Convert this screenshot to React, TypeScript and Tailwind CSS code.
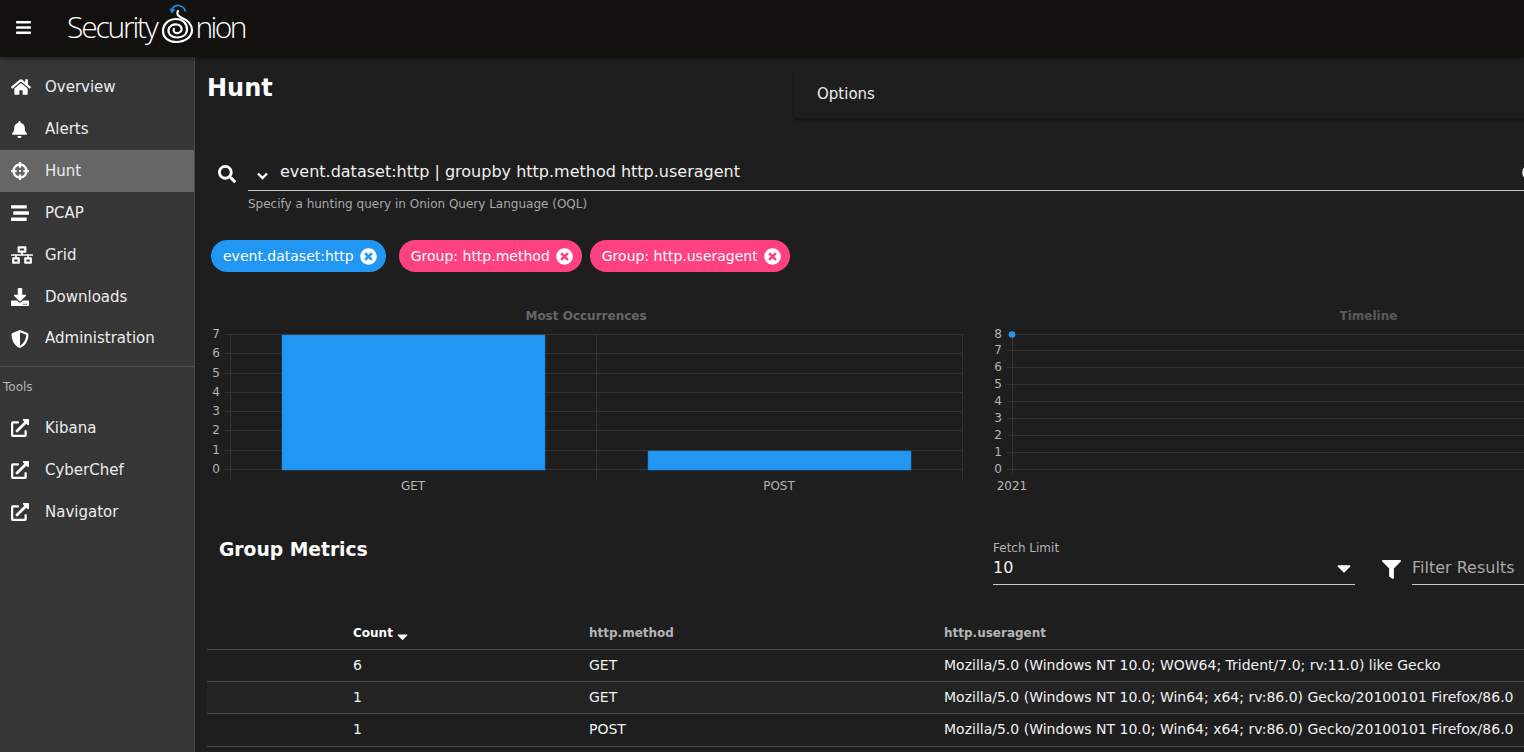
import React from "react";
import { FaBars, FaHome, FaBell, FaCrosshairs, FaStream, FaNetworkWired, FaDownload, FaShieldAlt, FaExternalLinkAlt, FaSearch, FaTimesCircle, FaFilter, FaCaretDown } from "react-icons/fa";

const font = "font-['DejaVu_Sans',sans-serif]";

function Logo() {
  return (
    <div className="flex items-center h-full ml-[35px] text-white font-['Open_Sans',sans-serif] font-light text-[30px] tracking-[-2.2px] leading-none select-none">
      <span className="-mt-[3px]">Security</span>
      <svg width="39" height="57" viewBox="158 0 39 57" className="shrink-0" fill="none">
        <path d="M187.500 11.500 C186 6 178 2.500 174 9" stroke="#1e88e5" strokeWidth="1.8" />
        <path d="M171.500 8.500 L177.500 9.500 L173.500 13.500 Z" fill="#1e88e5" />
        <path d="M180 11 C178 14 180 16 184 18 C190 20 194 25 194 30 C194 37 187 42 178 42 C171 42 165 38 165 31 C165 24 171 19 178 19 C185 19 189.500 24 189 30 C188.500 35 184 37.500 179 37.500 C173.500 37.500 170 34 170.500 30 C171 26 175 24 179 24.500 C182 25 184 27 183.500 30 C183 32.500 180 33.500 178 33 C176 32.500 175 30.500 176 29" stroke="white" strokeWidth="2.200" strokeLinecap="round" />
      </svg>
      <span className="-mt-[3px] tracking-[-2.6px]">nion</span>
    </div>
  );
}

const navTop = [
  { label: "Overview", Icon: FaHome, size: 20 },
  { label: "Alerts", Icon: FaBell, size: 17 },
  { label: "Hunt", Icon: FaCrosshairs, size: 18, active: true },
  { label: "PCAP", Icon: FaStream, size: 18 },
  { label: "Grid", Icon: FaNetworkWired, size: 22 },
  { label: "Downloads", Icon: FaDownload, size: 18 },
  { label: "Administration", Icon: FaShieldAlt, size: 18, short: true },
];
const navTools = ["Kibana", "CyberChef", "Navigator"];

function NavRow({ label, Icon, size, active, short }: { label: string; Icon: React.ComponentType<{ size?: number }>; size: number; active?: boolean; short?: boolean }) {
  return (
    <div className={`flex items-center pl-[11px] ${short ? "h-[41px]" : "h-[42px]"} ${active ? "bg-[#666666]" : ""}`}>
      <div className="w-[34px] shrink-0 flex text-white"><Icon size={size} /></div>
      <span className="text-[15px] text-[#ececec] leading-[20px] -mt-[1px]">{label}</span>
    </div>
  );
}

function Chip({ text, color, className }: { text: string; color: string; className?: string }) {
  return (
    <div className={`h-8 rounded-full pl-3 pr-[8px] flex items-center text-[14px] text-white ${color} ${className ?? ""}`}>
      <span className="whitespace-nowrap">{text}</span>
      <span className="ml-[6px] w-[18px] flex justify-center"><FaTimesCircle size={17} /></span>
    </div>
  );
}

const labelCls = { fill: "#b4b4b4", fontSize: 12, fontFamily: "DejaVu Sans" };

function BarChart() {
  const ys = [469, 450, 430, 411, 392, 373, 353, 334];
  return (
    <svg width="768" height="170" viewBox="207 325 768 170" className="block shrink-0">
      {ys.map((y, i) => (
        <g key={y}>
          <line x1="225" x2="963" y1={y + 0.5} y2={y + 0.5} stroke="#333333" />
          <text x="220" y={y + 4} textAnchor="end" {...labelCls}>{i}</text>
        </g>
      ))}
      {[230, 596, 962].map((x) => (
        <line key={x} x1={x + 0.5} x2={x + 0.5} y1="334" y2="480" stroke="#333333" />
      ))}
      <rect x="282" y="335" width="263" height="135" fill="#2196f3" stroke="#1f80cc" strokeWidth="0.5" />
      <rect x="648" y="451" width="263" height="19" fill="#2196f3" stroke="#1f80cc" strokeWidth="0.5" />
      <text x="413" y="490" textAnchor="middle" {...labelCls}>GET</text>
      <text x="779" y="490" textAnchor="middle" {...labelCls}>POST</text>
    </svg>
  );
}

function LineChart() {
  const ys = [469, 452, 435, 418, 401, 384, 367, 350, 334];
  return (
    <svg width="775" height="170" viewBox="983 325 775 170" className="block shrink-0">
      {ys.map((y, i) => (
        <g key={y}>
          <line x1="1007" x2="1758" y1={y + 0.5} y2={y + 0.5} stroke="#333333" />
          <text x="1002" y={y + 4} textAnchor="end" {...labelCls}>{i}</text>
        </g>
      ))}
      <line x1="1012.5" x2="1012.5" y1="334" y2="475" stroke="#333333" />
      <circle cx="1012" cy="334.500" r="3.300" fill="#2196f3" />
      <text x="1012" y="490" textAnchor="middle" {...labelCls}>2021</text>
    </svg>
  );
}

const rows = [
  ["6", "GET", "Mozilla/5.0 (Windows NT 10.0; WOW64; Trident/7.0; rv:11.0) like Gecko"],
  ["1", "GET", "Mozilla/5.0 (Windows NT 10.0; Win64; x64; rv:86.0) Gecko/20100101 Firefox/86.0"],
  ["1", "POST", "Mozilla/5.0 (Windows NT 10.0; Win64; x64; rv:86.0) Gecko/20100101 Firefox/86.0"],
];

export default function App() {
  return (
    <div className={`w-[1524px] h-[752px] overflow-hidden flex flex-col bg-[#1e1e1e] text-white ${font}`}>
      <header className="h-[57px] shrink-0 bg-[#12110d] flex items-center pl-[15px] shadow-[0_2px_4px_rgba(0,0,0,0.4)] relative z-10">
        <FaBars size={17} className="text-white -mt-[3px] shrink-0" />
        <Logo />
      </header>
      <div className="flex flex-1 min-h-0">
        <aside className="w-[195px] shrink-0 bg-[#363636] border-r border-r-[#4a4a4a] pt-[9px]">
          {navTop.map((n) => <NavRow key={n.label} {...n} />)}
          <div className="h-px bg-[#505050] mt-[7px]" />
          <div className="text-[12px] text-[#b4b4b4] pl-[3px] mt-[12px] h-[18px] leading-[16px]">Tools</div>
          <div className="mt-[10px]">
            {navTools.map((t) => <NavRow key={t} label={t} Icon={FaExternalLinkAlt} size={18} />)}
          </div>
        </aside>
        <main className="flex-1 min-w-0 overflow-hidden pl-3">
          <div className="w-[1551px]">
            <div className="flex items-start">
              <h1 className="text-[24px] font-bold leading-[32px] mt-[15px] w-[587px] shrink-0">Hunt</h1>
              <div className="flex-1 h-[48px] mt-[13px] bg-[#1e1e1e] rounded-[4px] shadow-[0_2px_3px_rgba(0,0,0,0.35)] pl-[23px] flex items-center text-[15px] text-[#ececec]">Options</div>
            </div>
            <div className="flex items-start mt-[32px] pl-[11px]">
              <div className="w-[30px] shrink-0 pt-[15px]"><FaSearch size={18} /></div>
              <div className="flex-1">
                <div className="h-[41px] border-b border-b-[#c8c8c8] flex items-center text-[16px] text-[#f0f0f0] pt-[3px] relative">
                  <svg width="11" height="8" viewBox="0 0 11 8" className="ml-[9px] mt-[8px] shrink-0" fill="none">
                    <path d="M1 1.500 L5.500 6 L10 1.500" stroke="white" strokeWidth="2.400" />
                  </svg>
                  <span className="ml-[12px] whitespace-nowrap">event.dataset:http | groupby http.method http.useragent</span>
                  <FaTimesCircle size={17} className="absolute left-[1274px] top-[14px]" />
                </div>
                <div className="text-[12px] text-[#a8a8a8] mt-[5px] leading-[16px]">Specify a hunting query in Onion Query Language (OQL)</div>
              </div>
            </div>
            <div className="flex mt-[28px] pl-[4px]">
              <Chip text="event.dataset:http" color="bg-[#2196f3]" />
              <Chip text="Group: http.method" color="bg-[#ff4081]" className="ml-[13px]" />
              <Chip text="Group: http.useragent" color="bg-[#ff4081]" className="ml-[8px]" />
            </div>
            <div className="flex mt-[36px]">
              <div className="w-[758px] shrink-0">
                <div className="text-center text-[12px] font-bold text-[#666666] leading-4">Most Occurrences</div>
                <div className="mt-[1px]"><BarChart /></div>
              </div>
              <div className="ml-[18px] flex-1">
                <div className="text-center text-[12px] font-bold text-[#5a5a5a] leading-4 pr-[4px]">Timeline</div>
                <div className="mt-[1px]"><LineChart /></div>
              </div>
            </div>
            <div className="flex items-start mt-[32px]">
              <h2 className="text-[18.72px] font-bold w-[786px] shrink-0 pl-3 mt-[9px] leading-[28px]">Group Metrics</h2>
              <div className="w-[362px] shrink-0 border-b border-b-[#c8c8c8] h-[58px] pt-[13px]">
                <div className="text-[12px] text-[#b4b4b4] leading-[16px]">Fetch Limit</div>
                <div className="flex items-center justify-between text-[16px] text-[#f0f0f0] leading-[24px]">
                  <span>10</span>
                  <FaCaretDown size={22} className="text-white" />
                </div>
              </div>
              <FaFilter size={19} className="ml-[27px] mt-[33px] shrink-0" />
              <div className="ml-[11px] flex-1 border-b border-b-[#c8c8c8] h-[58px] pt-[29px] text-[16px] leading-[24px] text-[#aaaaaa]">Filter Results</div>
            </div>
            <table className="table-fixed w-full mt-[32px] border-collapse">
              <colgroup>
                <col className="w-[130px]" />
                <col className="w-[236px]" />
                <col className="w-[355px]" />
                <col />
              </colgroup>
              <thead>
                <tr className="h-[32px] border-b border-b-[#4a4a4a] text-[12px] font-bold text-[#b4b4b4] text-left">
                  <th />
                  <th className="px-4 text-white whitespace-nowrap">Count <FaCaretDown size={17} className="inline-block align-[-3px] relative top-[5px] -ml-[3px]" /></th>
                  <th className="px-4">http.method</th>
                  <th className="px-4">http.useragent</th>
                </tr>
              </thead>
              <tbody>
                {rows.map((r, i) => (
                  <tr key={i} className={`${i === 2 ? "h-[33px]" : "h-[32px]"} border-b border-b-[#4a4a4a] text-[14px] text-[#f0f0f0] ${i === 1 ? "bg-[#232323]" : ""}`}>
                    <td />
                    <td className="px-4">{r[0]}</td>
                    <td className="px-4">{r[1]}</td>
                    <td className="px-4 whitespace-nowrap">{r[2]}</td>
                  </tr>
                ))}
              </tbody>
            </table>
          </div>
        </main>
      </div>
    </div>
  );
}
